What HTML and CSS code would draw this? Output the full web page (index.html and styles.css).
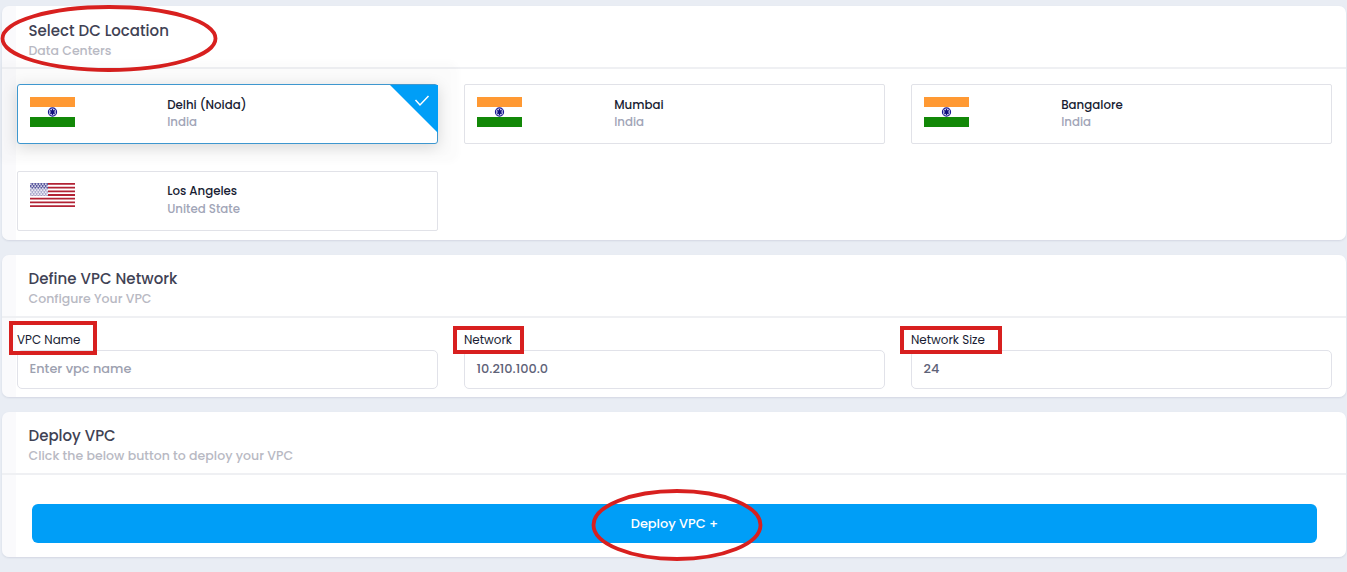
FILE: index.html
```html
<!DOCTYPE html>
<html lang="en">
<head>
<meta charset="utf-8">
<title>Deploy VPC</title>
<link rel="stylesheet" href="styles.css">
</head>
<body>
<svg class="defs" width="0" height="0">
  <defs>
    <symbol id="india" viewBox="0 0 45 30">
      <path fill="#ff9933" d="M0 0h45v10H0z"/><path fill="#fff" d="M0 10h45v10H0z"/><path fill="#128807" d="M0 20h45v10H0z"/>
      <circle cx="22.5" cy="15" r="4.1" fill="#d4d4f2" stroke="#1a1a94" stroke-width="1.1"/>
      <path stroke="#10107f" stroke-width="1.1" d="M22.5 12v6M19.500 15h6M20.300 12.800l4.400 4.400M24.700 12.800l-4.400 4.400"/>
      <circle cx="22.5" cy="15" r="1.5" fill="#10107f"/>
    </symbol>
    <pattern id="stars" width="3" height="4" patternUnits="userSpaceOnUse">
      <path fill="#5c5aa0" d="M0 0h3v4H0z"/><path fill="#fff" d="M0 .4h1.600v1.300H0zM1.400 2.400h1.600v1.300H1.400z"/>
    </pattern>
    <symbol id="usa" viewBox="0 0 45 24">
      <path fill="#fff" d="M0 0h45v24H0z"/>
      <path stroke="#b22234" stroke-width="1.85" d="M0 .92h45M0 4.62h45M0 8.31h45M0 12h45M0 15.69h45M0 19.38h45M0 23.08h45"/>
      <path fill="url(#stars)" d="M0 0h18v12.9H0z"/>
      <path fill="#fff" opacity=".5" d="M0 5.500h18v7.400H0z"/>
    </symbol>
  </defs>
</svg>
<main class="page">
  <section class="panel panel-location">
    <header class="panel-head">
      <h2 class="title">Select DC Location</h2>
      <p class="subtitle">Data Centers</p>
      <svg class="mark mark-location" width="218" height="70"><ellipse cx="109" cy="34.500" rx="106.500" ry="31.500"/></svg>
    </header>
    <div class="locations">
      <div class="card selected">
        <svg class="flag" width="45" height="30"><use href="#india"/></svg>
        <div class="place"><strong>Delhi (Noida)</strong><span>India</span></div>
        <svg class="corner" width="48" height="48"><path fill="#009ef7" d="M0 0h48v48z"/><path class="tick" d="M25.500 15l4.500 5 8.500-9"/></svg>
      </div>
      <div class="card">
        <svg class="flag" width="45" height="30"><use href="#india"/></svg>
        <div class="place"><strong>Mumbai</strong><span>India</span></div>
      </div>
      <div class="card">
        <svg class="flag" width="45" height="30"><use href="#india"/></svg>
        <div class="place"><strong>Bangalore</strong><span>India</span></div>
      </div>
      <div class="card">
        <svg class="flag" width="45" height="24"><use href="#usa"/></svg>
        <div class="place place-us"><strong>Los Angeles</strong><span>United State</span></div>
      </div>
    </div>
  </section>

  <section class="panel panel-network">
    <header class="panel-head">
      <h2 class="title title-network">Define VPC Network</h2>
      <p class="subtitle">Configure Your VPC</p>
    </header>
    <div class="fields">
      <div class="field"><label>VPC Name</label><div class="input placeholder">Enter vpc name</div><i class="box box-name"></i></div>
      <div class="field"><label>Network</label><div class="input">10.210.100.0</div><i class="box box-network"></i></div>
      <div class="field"><label>Network Size</label><div class="input">24</div><i class="box box-size"></i></div>
    </div>
  </section>

  <section class="panel panel-deploy">
    <header class="panel-head">
      <h2 class="title">Deploy VPC</h2>
      <p class="subtitle subtitle-deploy">Click the below button to deploy your VPC</p>
    </header>
    <div class="deploy">
      <button class="button">Deploy VPC +</button>
      <svg class="mark mark-deploy" width="172" height="74"><ellipse cx="86" cy="37" rx="83.500" ry="34"/></svg>
    </div>
  </section>
</main>
</body>
</html>
```
FILE: styles.css
```css
* { box-sizing: border-box; }
body { margin: 0; background: #e9edf4; font-family: Poppins, Inter, "Noto Sans", sans-serif; }
.defs { display: block; }
.page { height: 572px; padding: 6px 1px 0 2px; display: flex; flex-direction: column; gap: 15px; overflow: hidden; }
.panel { border-radius: 7px; background: linear-gradient(90deg, #fafafc 14px, #fff 14px); box-shadow: 0 1px 2px rgba(80, 85, 120, .14); }
.panel-location { height: 234px; }
.panel-network { height: 142px; }
.panel-deploy { height: 145px; }
.panel-head { position: relative; height: 63px; padding: 13px 0 0 26.500px; border-bottom: 2px solid #eff0f3; }
.panel-location .panel-head { padding-top: 14px; }
.title { margin: 0; font-size: 15px; line-height: 22px; font-weight: 500; color: #3f4254; white-space: nowrap; }
.title-network { letter-spacing: .04px; }
.subtitle { margin: 0; font-size: 12.5px; line-height: 18px; font-weight: 500; color: #b8b9c3; white-space: nowrap; }
.subtitle-deploy { letter-spacing: .03px; }
.locations { display: grid; grid-template-columns: repeat(3, 421px); gap: 27px 26px; padding: 15px 0 0 15px; }
.card { position: relative; height: 60px; display: flex; align-items: flex-start; padding: 12px; border: 1px solid #e1e2e8; border-radius: 2px; background: #fff; }
.card.selected { border-color: #3e97cf; border-radius: 3px; box-shadow: 0 3px 15px rgba(0, 0, 0, .15), 0 -2px 6px 21px rgba(0, 0, 0, .014); }
.flag { flex: none; }
.card:last-child .flag { margin-top: -1px; }
.place { display: flex; flex-direction: column; margin: 0 0 0 92.200px; font-size: 11.800px; }
.place strong { height: 16px; line-height: 17px; font-weight: 500; color: #181c32; }
.place span { line-height: 18px; color: #a1a5b7; font-weight: 500; }
.place-us { margin-top: -1px; }
.place-us span { padding-top: 1px; }
.corner { position: absolute; top: 0; right: -1px; }
.tick { fill: none; stroke: #fff; stroke-width: 1.5; }
.fields { display: grid; grid-template-columns: repeat(3, 421px); gap: 26px; padding: 13px 0 0 15px; }
.field { position: relative; display: flex; flex-direction: column; }
.field label { height: 19px; line-height: 19px; font-size: 11.900px; color: #181c32; }
.input { height: 39px; padding: 0 11.500px; border: 1px solid #e1e2e9; border-radius: 5px; font-size: 12.900px; line-height: 36px; font-weight: 500; color: #5e6278; }
.placeholder { color: #9da1b0; }
.box { position: absolute; border: 4px solid #d8201f; }
.box-name { left: -8px; top: -10px; width: 88px; height: 34px; }
.box-network { left: -11px; top: -5px; width: 71px; height: 28px; }
.box-size { left: -11px; top: -5px; width: 102px; height: 28px; }
.deploy { position: relative; padding: 29px 29px 0 30px; }
.button { display: block; width: 100%; height: 39px; padding: 0; border: 0; border-radius: 6px; background: #009ef7; color: #fff; font-family: inherit; font-size: 12.900px; font-weight: 500; line-height: 39px; }
.mark { position: absolute; fill: none; stroke: #d8201f; stroke-width: 3.800; }
.mark-location { left: -2px; top: -2px; }
.mark-deploy { left: 588.500px; top: 12.500px; }
```
